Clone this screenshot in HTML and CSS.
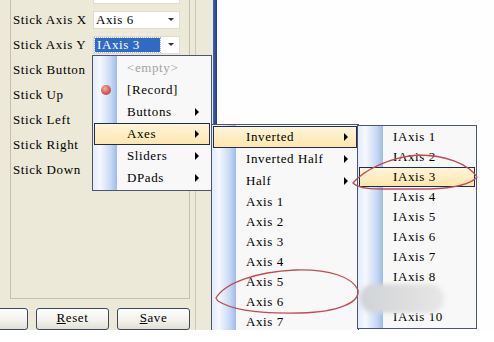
FILE: index.html
```html
<!DOCTYPE html>
<html lang="en">
<head>
    <meta charset="UTF-8">
    <title>Stick Mapping</title>
    <link rel="stylesheet" href="styles.css">
</head>
<body>
    <div class="screen">
        <!-- Mapping dialog -->
        <div class="dialog">
            <div class="main">
                <div class="panel">
                    <div class="rows">
                        <div class="row"><span class="label"></span><div class="combo"><span class="value"></span><span class="drop"></span></div></div>
                        <div class="row"><span class="label">Stick Axis X</span><div class="combo"><span class="value">Axis 6</span><span class="drop"></span></div></div>
                        <div class="row"><span class="label">Stick Axis Y</span><div class="combo"><span class="value"><span class="sel">IAxis 3</span></span><span class="drop"></span></div></div>
                        <div class="row"><span class="label">Stick Button</span></div>
                        <div class="row"><span class="label">Stick Up</span></div>
                        <div class="row"><span class="label">Stick Left</span></div>
                        <div class="row"><span class="label">Stick Right</span></div>
                        <div class="row"><span class="label">Stick Down</span></div>
                    </div>
                </div>
                <div class="buttons">
                    <div class="btn"></div>
                    <div class="btn"><u>R</u>eset</div>
                    <div class="btn"><u>S</u>ave</div>
                </div>
            </div>
        </div>
        <div class="edge"></div>
        <div class="desk"></div>

        <!-- Popup menus -->
        <div class="menu m1">
            <div class="item off"><span class="ico"></span><span class="text">&lt;empty&gt;</span></div>
            <div class="item"><span class="ico"><span class="rec"></span></span><span class="text">[Record]</span></div>
            <div class="item"><span class="ico"></span><span class="text">Buttons</span><span class="arrow"></span></div>
            <div class="item hot"><span class="ico"></span><span class="text">Axes</span><span class="arrow"></span></div>
            <div class="item"><span class="ico"></span><span class="text">Sliders</span><span class="arrow"></span></div>
            <div class="item"><span class="ico"></span><span class="text">DPads</span><span class="arrow"></span></div>
        </div>

        <div class="menu m2">
            <div class="item hot"><span class="ico"></span><span class="text">Inverted</span><span class="arrow"></span></div>
            <div class="item"><span class="ico"></span><span class="text">Inverted Half</span><span class="arrow"></span></div>
            <div class="item"><span class="ico"></span><span class="text">Half</span><span class="arrow"></span></div>
            <div class="item short"><span class="ico"></span><span class="text">Axis 1</span></div>
            <div class="item short"><span class="ico"></span><span class="text">Axis 2</span></div>
            <div class="item short"><span class="ico"></span><span class="text">Axis 3</span></div>
            <div class="item short"><span class="ico"></span><span class="text">Axis 4</span></div>
            <div class="item short"><span class="ico"></span><span class="text">Axis 5</span></div>
            <div class="item short"><span class="ico"></span><span class="text">Axis 6</span></div>
            <div class="item short"><span class="ico"></span><span class="text">Axis 7</span></div>
        </div>

        <div class="menu m3">
            <div class="item"><span class="ico"></span><span class="text">IAxis 1</span></div>
            <div class="item"><span class="ico"></span><span class="text">IAxis 2</span></div>
            <div class="item hot"><span class="ico"></span><span class="text">IAxis 3</span></div>
            <div class="item"><span class="ico"></span><span class="text">IAxis 4</span></div>
            <div class="item"><span class="ico"></span><span class="text">IAxis 5</span></div>
            <div class="item"><span class="ico"></span><span class="text">IAxis 6</span></div>
            <div class="item"><span class="ico"></span><span class="text">IAxis 7</span></div>
            <div class="item"><span class="ico"></span><span class="text">IAxis 8</span></div>
            <div class="item"><span class="ico"></span><span class="text">IAxis 9</span></div>
            <div class="item"><span class="ico"></span><span class="text">IAxis 10</span></div>
        </div>

        <!-- Hand-drawn marks on the screenshot -->
        <div class="smudge"></div>
        <svg class="marks" width="494" height="330" viewBox="0 0 494 330">
            <path d="M353,183 C364,170 390,157 418,155 C446,155 468,164 477,177 C471,184 455,188 430,189 L380,189 C366,189 357,187 353,183 Z" />
            <path d="M216,298 C225,283 255,272 295,270 C330,269 352,277 358,290 C360,302 340,312 300,313 C260,314 232,310 218,301 Z" />
        </svg>
    </div>
</body>
</html>
```

FILE: styles.css
```css
body {
    margin: 0;
    background: #ffffff;
    font-family: "Liberation Serif", serif;
    font-size: 13px;
    letter-spacing: 0.6px;
    color: #000000;
}

.screen {
    position: relative;
    width: 494px;
    height: 330px;
    overflow: hidden;
    display: flex;
}

/* dialog */
.dialog {
    width: 213px;
    background: #ece9d8;
    display: flex;
}

.main {
    width: 196px;
    box-sizing: border-box;
    border-right: 1px solid #cbc8b8;
    display: flex;
    flex-direction: column;
}

.panel {
    box-sizing: border-box;
    width: 180px;
    height: 304px;
    margin-left: 10px;
    padding-left: 2px;
    border: 1px solid #c3c0b0;
    border-top: none;
}

.rows {
    margin-top: -18px;
}

.row {
    display: flex;
    align-items: center;
    height: 25px;
}

.label {
    width: 80px;
    white-space: nowrap;
}

.combo {
    width: 87px;
    height: 18px;
    box-sizing: border-box;
    background: #ffffff;
    border: 1px solid #dfdcd0;
    display: flex;
    align-items: center;
}

.combo .value {
    flex: 1;
    padding-left: 2px;
    display: flex;
    align-items: center;
}

.combo .sel {
    width: 63px;
    height: 14px;
    line-height: 14px;
    margin-left: -1px;
    padding-left: 2px;
    background: #316ac5;
    color: #ffffff;
    outline: 1px dotted #9fb8e6;
}

.combo .drop {
    width: 16px;
    display: flex;
    justify-content: center;
}

.combo .drop::after {
    content: "";
    border-left: 3px solid transparent;
    border-right: 3px solid transparent;
    border-top: 3px solid #333333;
}

.buttons {
    display: flex;
    gap: 8px;
    margin-top: 9px;
    margin-left: -45px;
}

.btn {
    width: 73px;
    height: 22px;
    box-sizing: border-box;
    border: 1px solid #3c4a5e;
    border-radius: 3px;
    background: linear-gradient(#fdfdfb, #f2f1ec 60%, #e2dfd5);
    text-align: center;
    line-height: 18px;
}

.edge {
    width: 4px;
    background: linear-gradient(to right, #4064b4, #1f3d8e);
}

.desk {
    flex: 1;
    background: #fefefe;
}

/* popup menus */
.menu {
    position: absolute;
    box-sizing: border-box;
    padding: 1px 0;
    border: 1px solid #4b566e;
    background:
        linear-gradient(to right, #e3ecfa, #f5f8fe 30%, #c6d8f4 75%, #9dbbe9) 0 0 / var(--side) 100% no-repeat,
        #f8f8f8;
}

.m1 {
    left: 92px;
    top: 55px;
    width: 120px;
    --side: 24px;
    --arrow: 10px;
}

.m2 {
    left: 211px;
    top: 124px;
    width: 148px;
    --side: 24px;
    --arrow: 8px;
}

.m3 {
    left: 357px;
    top: 125px;
    width: 120px;
    --side: 25px;
}

.item {
    display: flex;
    align-items: center;
    height: 22px;
    box-sizing: border-box;
    margin: 0 1px;
    border: 1px solid transparent;
}

.item.short,
.m3 .item {
    height: 20px;
}

.item.hot {
    background: linear-gradient(#fff5da, #ffe6ad);
    border-color: #1f2a55;
}

.item.off .text {
    color: #a3a3a3;
}

.ico {
    width: calc(var(--side) - 2px);
    display: flex;
    justify-content: center;
}

.text {
    flex: 1;
    margin-left: 10px;
    white-space: nowrap;
}

.arrow {
    margin-right: var(--arrow);
    border-left: 4px solid #000000;
    border-top: 4px solid transparent;
    border-bottom: 4px solid transparent;
}

.rec {
    width: 10px;
    height: 10px;
    border-radius: 50%;
    background: radial-gradient(circle at 40% 35%, #f3b2aa, #d05a55 55%, #9e3a38);
}

/* marks over the screenshot */
.smudge {
    position: absolute;
    left: 360px;
    top: 284px;
    width: 84px;
    height: 29px;
    border-radius: 14px;
    background: linear-gradient(to right, #d0d3d8, #dedede 60%, #e8e8e8);
    filter: blur(2px);
}

.marks {
    position: absolute;
    left: 0;
    top: 0;
    pointer-events: none;
}

.marks path {
    fill: none;
    stroke: #bd4d55;
    stroke-width: 1.3;
}
```
